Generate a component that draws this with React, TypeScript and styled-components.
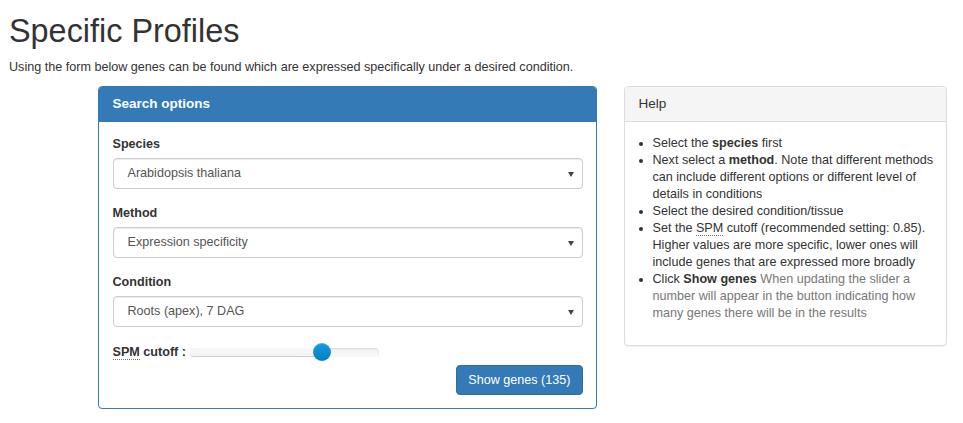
import React from "react";
import styled, { createGlobalStyle } from "styled-components";

const Global = createGlobalStyle`
  html, body { margin: 0; padding: 0; background: #fff; }
  body {
    font-family: "Liberation Sans", Arial, sans-serif;
    font-size: 12.6px;
    line-height: 17px;
    color: #333;
  }
  * { box-sizing: border-box; }
`;

const Page = styled.div`
  padding: 0 9px;
`;

const Title = styled.h1`
  margin: 12px 0 0;
  font-size: 32.4px;
  font-weight: 500;
  line-height: 39px;
  color: #333;
`;

const Intro = styled.p`
  margin: 8px 0 10px;
`;

const Columns = styled.div`
  display: grid;
  grid-template-columns: 499px 323px;
  column-gap: 27px;
  align-items: start;
  margin-left: 89px;
`;

const Panel = styled.div<{ $tone: "primary" | "default" }>`
  border: 1px solid ${(p) => (p.$tone === "primary" ? "#337ab7" : "#ddd")};
  border-radius: 4px;
  background: #fff;
  box-shadow: 0 1px 1px rgba(0, 0, 0, 0.05);
`;

const PanelHeading = styled.div<{ $tone: "primary" | "default" }>`
  padding: 9px 13.5px;
  height: 35px;
  background: ${(p) => (p.$tone === "primary" ? "#337ab7" : "#f5f5f5")};
  color: ${(p) => (p.$tone === "primary" ? "#fff" : "#333")};
  border-bottom: 1px solid ${(p) => (p.$tone === "primary" ? "#337ab7" : "#ddd")};
  border-radius: 3px 3px 0 0;
  font-size: 13.5px;
  line-height: 16px;
`;

const PanelBody = styled.div<{ $bottom?: number }>`
  padding: 13px 13.5px ${(p) => p.$bottom ?? 13}px;
`;

const FormGroup = styled.div`
  margin-bottom: 15px;
`;

const Label = styled.label`
  display: block;
  font-weight: 700;
  line-height: 18px;
  margin-bottom: 5px;
`;

const Select = styled.div`
  position: relative;
  height: 31px;
  border: 1px solid #ccc;
  border-radius: 4px;
  box-shadow: inset 0 1px 1px rgba(0, 0, 0, 0.075);
  color: #555;
  padding: 0 30px 0 14px;
  display: flex;
  align-items: center;
`;

const Caret = styled.span`
  position: absolute;
  right: 8px;
  top: 50%;
  margin-top: -2px;
  width: 0;
  height: 0;
  border-left: 3.5px solid transparent;
  border-right: 3.5px solid transparent;
  border-top: 5px solid #444;
`;

const SliderRow = styled.div`
  display: flex;
  align-items: center;
  height: 20px;
`;

const InlineLabel = styled.span`
  font-weight: 700;
  margin-right: 4px;
`;

const Abbr = styled.abbr`
  text-decoration: none;
  border-bottom: 1px dotted #777;
  cursor: help;
`;

const Slider = styled.div`
  position: relative;
  width: 189px;
  height: 18px;
`;

const Track = styled.div`
  position: absolute;
  left: 0;
  right: 0;
  top: 50%;
  margin-top: -4.5px;
  height: 9px;
  border-radius: 4px;
  background: linear-gradient(to bottom, #f3f3f3, #f9f9f9);
  box-shadow: inset 0 1px 2px rgba(0, 0, 0, 0.1);
  overflow: hidden;
`;

const Selection = styled.div`
  height: 100%;
  background: linear-gradient(to bottom, #f9f9f9, #f3f3f3);
  box-shadow: inset 0 -1px 0 rgba(0, 0, 0, 0.15);
  border-radius: 4px 0 0 4px;
`;

const Handle = styled.div`
  position: absolute;
  top: 0;
  width: 18px;
  height: 18px;
  margin-left: -9px;
  border-radius: 50%;
  background: linear-gradient(to bottom, #149bdf 0%, #0480be 100%);
  box-shadow: inset 0 1px 0 rgba(255, 255, 255, 0.2), 0 1px 2px rgba(0, 0, 0, 0.05);
`;

const Actions = styled.div`
  display: flex;
  justify-content: flex-end;
  margin-top: 3px;
`;

const Button = styled.button`
  font-family: inherit;
  font-size: 12.6px;
  line-height: 18px;
  padding: 5px 11px;
  height: 30px;
  color: #fff;
  background: #337ab7;
  border: 1px solid #2e6da4;
  border-radius: 4px;
  cursor: pointer;
`;

const HelpList = styled.ul`
  margin: 0 0 9px;
  padding: 0 0 0 14px;
  margin-right: -4px;
`;

const Muted = styled.span`
  color: #777;
`;

const fields = [
  { label: "Species", value: "Arabidopsis thaliana" },
  { label: "Method", value: "Expression specificity" },
  { label: "Condition", value: "Roots (apex), 7 DAG" },
];

export default function App() {
  const sliderPct = 70;
  return (
    <Page>
      <Global />
      <Title>Specific Profiles</Title>
      <Intro>
        Using the form below genes can be found which are expressed specifically under a desired condition.
      </Intro>
      <Columns>
        <Panel $tone="primary">
          <PanelHeading $tone="primary">
            <strong>Search options</strong>
          </PanelHeading>
          <PanelBody $bottom={13}>
            {fields.map((f) => (
              <FormGroup key={f.label}>
                <Label>{f.label}</Label>
                <Select>
                  {f.value}
                  <Caret />
                </Select>
              </FormGroup>
            ))}
            <SliderRow>
              <InlineLabel>
                <Abbr title="Specificity measure">SPM</Abbr> cutoff :
              </InlineLabel>
              <Slider>
                <Track>
                  <Selection style={{ width: `${sliderPct}%` }} />
                </Track>
                <Handle style={{ left: `${sliderPct}%` }} />
              </Slider>
            </SliderRow>
            <Actions>
              <Button>Show genes (135)</Button>
            </Actions>
          </PanelBody>
        </Panel>
        <Panel $tone="default">
          <PanelHeading $tone="default">Help</PanelHeading>
          <PanelBody $bottom={13.5}>
            <HelpList>
              <li>
                Select the <strong>species</strong> first
              </li>
              <li>
                Next select a <strong>method</strong>. Note that different methods can include different
                options or different level of details in conditions
              </li>
              <li>Select the desired condition/tissue</li>
              <li>
                Set the <Abbr title="Specificity measure">SPM</Abbr> cutoff (recommended setting: 0.85).
                Higher values are more specific, lower ones will include genes that are expressed more broadly
              </li>
              <li>
                Click <strong>Show genes</strong>{" "}
                <Muted>
                  When updating the slider a number will appear in the button indicating how many genes there
                  will be in the results
                </Muted>
              </li>
            </HelpList>
          </PanelBody>
        </Panel>
      </Columns>
    </Page>
  );
}
